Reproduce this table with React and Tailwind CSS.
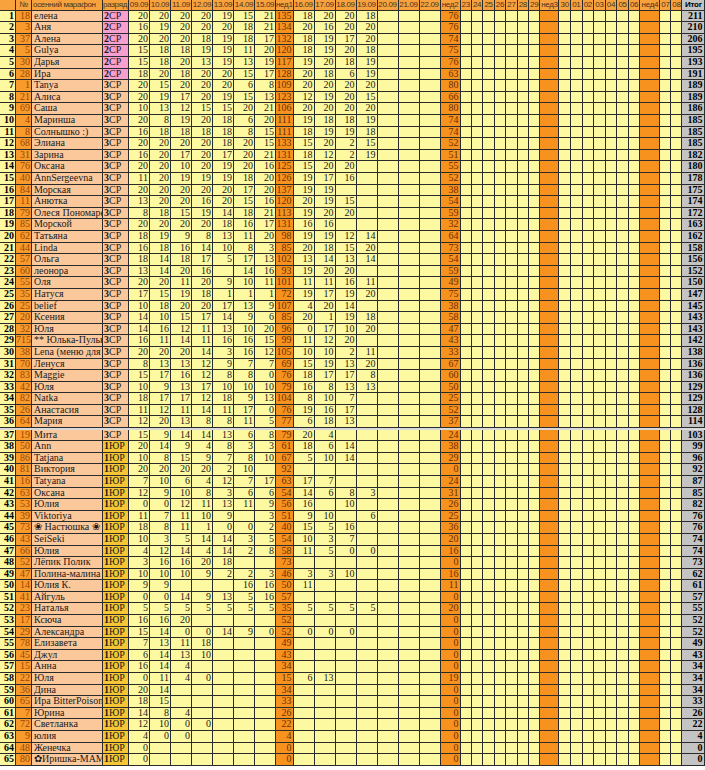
import React from "react";

const GRID =
  "grid grid-cols-[16px_16px_71px_26px_repeat(7,21px)_17.5px_repeat(7,21px)_20px_repeat(7,11.43px)_19px_repeat(7,11.57px)_20px_11px_11px_23px]";

const rows = [
  [18, "елена", "2СР", [20, 20, 20, 20, 19, 15, 21], [18, 20, 20, 18]],
  [3, "Аня", "2СР", [16, 19, 20, 20, 20, 18, 21], [20, 16, 20, 20]],
  [37, "Алена", "2СР", [20, 20, 20, 18, 19, 18, 17], [18, 19, 17, 20]],
  [5, "Gulya", "2СР", [15, 18, 18, 19, 19, 11, 20], [18, 19, 20, 18]],
  [30, "Дарья", "2СР", [15, 18, 20, 13, 19, 13, 19], [19, 20, 18, 19]],
  [28, "Ира", "2СР", [18, 20, 18, 20, 20, 15, 17], [20, 18, 6, 19]],
  [1, "Tanya", "3СР", [20, 15, 20, 20, 20, 6, 8], [20, 20, 20, 20]],
  [21, "Алиса", "3СР", [20, 19, 17, 20, 19, 15, 13], [12, 19, 20, 15]],
  [69, "Саша", "3СР", [10, 13, 12, 15, 15, 20, 21], [20, 20, 20, 20]],
  [4, "Маринша", "3СР", [20, 8, 19, 20, 18, 6, 20], [19, 18, 18, 19]],
  [8, "Солнышко :)", "3СР", [16, 18, 18, 18, 18, 8, 15], [18, 19, 19, 18]],
  [68, "Элиана", "3СР", [20, 20, 20, 20, 18, 20, 15], [15, 20, 2, 15]],
  [31, "Зарина", "3СР", [16, 20, 17, 20, 17, 20, 21], [18, 12, 2, 19]],
  [76, "Оксана", "3СР", [20, 20, 10, 20, 19, 20, 16], [15, 20, 20, null]],
  [40, "AnnSergeevna", "3СР", [11, 20, 19, 19, 19, 18, 20], [19, 17, 16, null]],
  [84, "Морская", "3СР", [20, 20, 20, 20, 20, 17, 20], [19, 19, null, null]],
  [11, "Анютка", "3СР", [13, 20, 20, 16, 20, 15, 16], [20, 19, 15, null]],
  [79, "Олеся Пономарева", "3СР", [8, 18, 15, 19, 14, 18, 21], [19, 20, 20, null]],
  [85, "Морской", "3СР", [20, 20, 20, 20, 18, 16, 17], [16, 16, null, null]],
  [62, "Татьяна", "3СР", [18, 19, 9, 8, 13, 11, 20], [19, 19, 12, 14]],
  [44, "Linda", "3СР", [16, 18, 16, 14, 10, 8, 3], [20, 18, 15, 20]],
  [57, "Ольга", "3СР", [18, 14, 18, 17, 5, 17, 13], [13, 14, 13, 14]],
  [60, "леонора", "3СР", [13, 14, 20, 16, null, 14, 16], [19, 20, 20, null]],
  [55, "Оля", "3СР", [20, 20, 11, 20, 9, 10, 11], [11, 11, 16, 11]],
  [35, "Натуся", "3СР", [17, 15, 19, 18, 1, 1, 1], [19, 17, 19, 20]],
  [25, "belief", "3СР", [10, 18, 20, 20, 17, 13, 9], [4, 20, 14, null]],
  [20, "Ксения", "3СР", [14, 10, 15, 17, 14, 9, 6], [20, 1, 19, 18]],
  [32, "Юля", "3СР", [14, 16, 12, 11, 13, 10, 20], [0, 17, 10, 20]],
  [715, "** Юлька-Пулька", "3СР", [16, 11, 14, 11, 16, 16, 15], [11, 12, 20, null]],
  [38, "Lena (меню для ПП)", "3СР", [20, 20, 20, 14, 3, 16, 12], [10, 10, 2, 11]],
  [70, "Ленуся", "3СР", [8, 13, 13, 12, 9, 7, 7], [15, 19, 13, 20]],
  [83, "Maggie", "3СР", [15, 17, 16, 12, 8, 8, 0], [18, 17, 17, 8]],
  [42, "Юля", "3СР", [10, 9, 13, 17, 10, 10, 10], [16, 8, 13, 13]],
  [82, "Natka", "3СР", [18, 17, 17, 12, 18, 9, 13], [8, 10, 7, null]],
  [26, "Анастасия", "3СР", [11, 12, 11, 14, 11, 17, 0], [19, 16, 17, null]],
  [64, "Мария", "3СР", [12, 20, 13, 8, 8, 11, 5], [6, 18, 13, null]],
  [19, "Мита", "3СР", [15, 9, 14, 14, 13, 6, 8], [20, 4, null, null]],
  [50, "Ann", "1ЮР", [20, 14, 9, 4, 8, 3, 3], [18, 6, 14, null]],
  [86, "Tatjana", "1ЮР", [10, 8, 15, 9, 7, 8, 10], [5, 10, 14, null]],
  [81, "Виктория", "1ЮР", [20, 20, 20, 20, 2, 10, null], []],
  [16, "Tatyana", "1ЮР", [7, 10, 6, 4, 12, 7, 17], [17, 7]],
  [63, "Оксана", "1ЮР", [12, 9, 10, 8, 3, 6, 6], [14, 6, 8, 3]],
  [53, "Юлия", "1ЮР", [0, 0, 12, 11, 13, 11, 9], [16, null, 10, null]],
  [39, "Viktoriya", "1ЮР", [11, 7, 11, 10, 9, null, 3], [9, 10, null, 6]],
  [73, "❀ Настюшка ❀", "1ЮР", [18, 8, 11, 1, 0, 0, 2], [15, 5, 16, null]],
  [43, "SeiSeki", "1ЮР", [10, 3, 5, 14, 14, 3, 5], [10, 3, 7, null]],
  [66, "Юлия", "1ЮР", [4, 12, 14, 4, 14, 2, 8], [11, 5, 0, 0]],
  [52, "Лёпик Полик", "1ЮР", [3, 16, 16, 20, 18, null, null], []],
  [47, "Полина-малина", "1ЮР", [10, 10, 10, 9, 2, 2, 3], [3, 3, 10, null]],
  [14, "Юлия К.", "1ЮР", [9, 9, null, null, null, 16, 16], [11]],
  [41, "Айгуль", "1ЮР", [0, 0, 14, 9, 13, 5, 16], []],
  [23, "Наталья", "1ЮР", [5, 5, 5, 5, 5, 5, 5], [5, 5, 5, 5]],
  [17, "Ксюча", "1ЮР", [16, 16, 20], []],
  [29, "Александра", "1ЮР", [15, 14, 0, 0, 14, 9, 0], [0, 0, 0]],
  [78, "Елизавета", "1ЮР", [7, 13, 11, 18], []],
  [45, "Джул", "1ЮР", [6, 14, 13, 10], []],
  [15, "Анна", "1ЮР", [16, 14, 4], []],
  [22, "Юля", "1ЮР", [0, 11, 4, 0], [6, 13]],
  [36, "Дина", "1ЮР", [20, 14], []],
  [65, "Ира BitterPoison", "1ЮР", [18, 15], []],
  [7, "Юрина", "1ЮР", [14, 8, 4], []],
  [72, "Светланка", "1ЮР", [12, 10, 0, 0], []],
  [9, "юлия", "1ЮР", [4, 0, 0], []],
  [48, "Женечка", "1ЮР", [0], []],
  [80, "✿Иришка-МАМА", "1ЮР", [0], []],
];

const B = "border-r border-b border-[#2b2b2b] overflow-hidden whitespace-nowrap";
const SERIF = "font-['Liberation_Serif',serif] text-[10px] leading-[10.6px]";
const SANS = "font-['Liberation_Sans',Arial,sans-serif] text-[8px] leading-[9.7px] tracking-[-0.3px]";

const YEL = "bg-[#fdf9a0]";
const WEEK = "bg-[#f7921e] text-[#6a2f00]";

function H({ children, cls = "" }) {
  return <div className={`${B} ${SANS} bg-[#f8a23e] text-[#4a3320] ${cls}`}>{children}</div>;
}

function Header() {
  const d1 = ["09.09", "10.09", "11.09", "12.09", "13.09", "14.09", "15.09"];
  const d2 = ["16.09", "17.09", "18.09", "19.09", "20.09", "21.09", "22.09"];
  const d3 = ["23", "24", "25", "26", "27", "28", "29"];
  const d4 = ["30", "01", "02", "03", "04", "05", "06"];
  return (
    <div className={`${GRID} h-[10.7px]`}>
      <H />
      <H cls="text-center">№</H>
      <H cls="pl-[1px]">осенний марафон</H>
      <H>разряд</H>
      {d1.map((d) => (
        <H key={d} cls="text-center">{d}</H>
      ))}
      <H cls="text-center">нед1</H>
      {d2.map((d) => (
        <H key={d} cls="text-center">{d}</H>
      ))}
      <H cls="text-center">нед2</H>
      {d3.map((d) => (
        <H key={d} cls="text-center">{d}</H>
      ))}
      <H cls="text-center">нед3</H>
      {d4.map((d) => (
        <H key={d} cls="text-center">{d}</H>
      ))}
      <H cls="text-center">нед4</H>
      <H cls="text-center">07</H>
      <H cls="text-center">08</H>
      <div className={`${B} ${SANS} bg-[#c4c4c4] text-black font-bold text-center`}>Итог</div>
    </div>
  );
}

function Num({ v, cls = YEL }) {
  return <div className={`${B} ${SERIF} ${cls} text-right pr-[1px] text-[#1a1a1a]`}>{v ?? ""}</div>;
}

function Row({ i, r }) {
  const [num, name, rank, w1raw, w2raw] = r;
  const w1 = Array.from({ length: 7 }, (_, k) => (w1raw[k] === undefined ? null : w1raw[k]));
  const w2 = Array.from({ length: 7 }, (_, k) => (w2raw[k] === undefined ? null : w2raw[k]));
  const s1 = w1.reduce((a, b) => a + (b ?? 0), 0);
  const s2 = w2.reduce((a, b) => a + (b ?? 0), 0);
  const rankBg =
    rank === "2СР" ? "bg-[#f7a0cf]" : rank === "3СР" ? "bg-[#fac89b]" : "bg-[#f7c634]";
  const empty7 = Array.from({ length: 7 });
  return (
    <div className={`${GRID} h-[11.6px]`}>
      <div className={`${B} ${SERIF} ${YEL} text-right pr-[1px] font-bold text-black`}>{i}</div>
      <div className={`${B} ${SERIF} bg-[#f89a2c] text-[#9c4600] text-right pr-[1px]`}>{num}</div>
      <div className={`${B} ${SERIF} bg-[#fac89b] text-[#1a1a1a] pl-[2px]`}>{name}</div>
      <div className={`${B} ${SERIF} ${rankBg} text-[#1a1a1a] pl-[1px]`}>
        <span className="font-bold">{rank[0]}</span>
        {rank.slice(1)}
      </div>
      {w1.map((v, k) => (
        <Num key={"a" + k} v={v} />
      ))}
      <Num v={s1} cls={WEEK} />
      {w2.map((v, k) => (
        <Num key={"b" + k} v={v} />
      ))}
      <Num v={s2} cls={WEEK} />
      {empty7.map((_, k) => (
        <div key={"c" + k} className={`${B} ${YEL}`} />
      ))}
      <div className={`${B} bg-[#f7921e]`} />
      {empty7.map((_, k) => (
        <div key={"d" + k} className={`${B} ${YEL}`} />
      ))}
      <div className={`${B} bg-[#f7921e]`} />
      <div className={`${B} ${YEL}`} />
      <div className={`${B} ${YEL}`} />
      <div className={`${B} ${SERIF} bg-[#c4c4c4] text-black font-bold text-right pr-[2px]`}>{s1 + s2}</div>
    </div>
  );
}

export default function App() {
  return (
    <div className="w-[705px] h-[770px] overflow-hidden bg-white">
      <Header />
      {rows.map((r, i) => (
        <React.Fragment key={i}>
          <Row i={i + 1} r={r} />
          {i === 35 && <div className="h-[1.5px] w-[705px] bg-[#d9d9d9]" />}
        </React.Fragment>
      ))}
    </div>
  );
}
